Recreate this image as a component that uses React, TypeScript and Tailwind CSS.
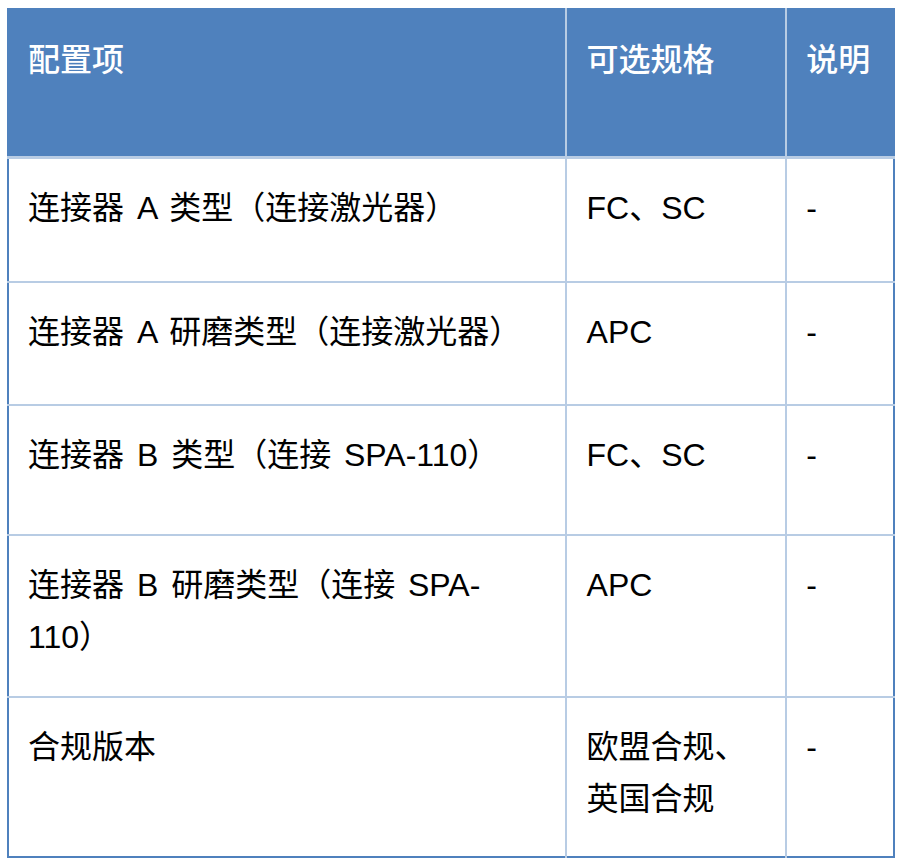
const rows = [
  { item: "连接器 A 类型（连接激光器）", spec: "FC、SC", h: "h-[125px]" },
  { item: "连接器 A 研磨类型（连接激光器）", spec: "APC", h: "h-[123px]" },
  { item: "连接器 B 类型（连接 SPA-110）", spec: "FC、SC", h: "h-[130px]" },
  {
    item: (
      <>
        连接器 B 研磨类型（连接 SPA-
        <br />
        110）
      </>
    ),
    spec: "APC",
    h: "h-[162px]",
  },
  {
    item: "合规版本",
    spec: (
      <>
        欧盟合规、
        <br />
        英国合规
      </>
    ),
    h: "h-[160px]",
  },
];

const App = () => {
  return (
    <div className="w-[904px] h-[868px] bg-white pt-[8px] pl-[7px]">
      <table
        className="w-[888px] border-collapse border-2 border-[#4f81bd] text-[32px] leading-[52px] [word-spacing:4px] text-black"
        style={{ fontFamily: '"Liberation Sans", "Noto Sans CJK SC", sans-serif' }}
      >
        <colgroup>
          <col className="w-[559px]" />
          <col className="w-[221px]" />
          <col className="w-[108px]" />
        </colgroup>
        <thead>
          <tr className="h-[148px] bg-[#4f81bd] text-white">
            <th className="align-top text-left font-medium pl-[19px] pt-[24px] border-b-[3px] border-b-[#b8cce4] border-r-2 border-r-[#b8cce4]">
              配置项
            </th>
            <th className="align-top text-left font-medium pl-[20px] pt-[24px] border-b-[3px] border-b-[#b8cce4] border-r-2 border-r-[#b8cce4]">
              可选规格
            </th>
            <th className="align-top text-left font-medium pl-[19px] pt-[24px] border-b-[3px] border-b-[#b8cce4]">
              说明
            </th>
          </tr>
        </thead>
        <tbody>
          {rows.map((r, i) => (
            <tr key={i} className={r.h}>
              <td className="align-top pl-[19px] pt-[23px] border-t-2 border-t-[#b8cce4] border-r-2 border-r-[#b8cce4]">
                {r.item}
              </td>
              <td className="align-top pl-[20px] pt-[23px] border-t-2 border-t-[#b8cce4] border-r-2 border-r-[#b8cce4]">
                {r.spec}
              </td>
              <td className="align-top pl-[19px] pt-[23px] border-t-2 border-t-[#b8cce4]">-</td>
            </tr>
          ))}
        </tbody>
      </table>
    </div>
  );
};

export default App;
